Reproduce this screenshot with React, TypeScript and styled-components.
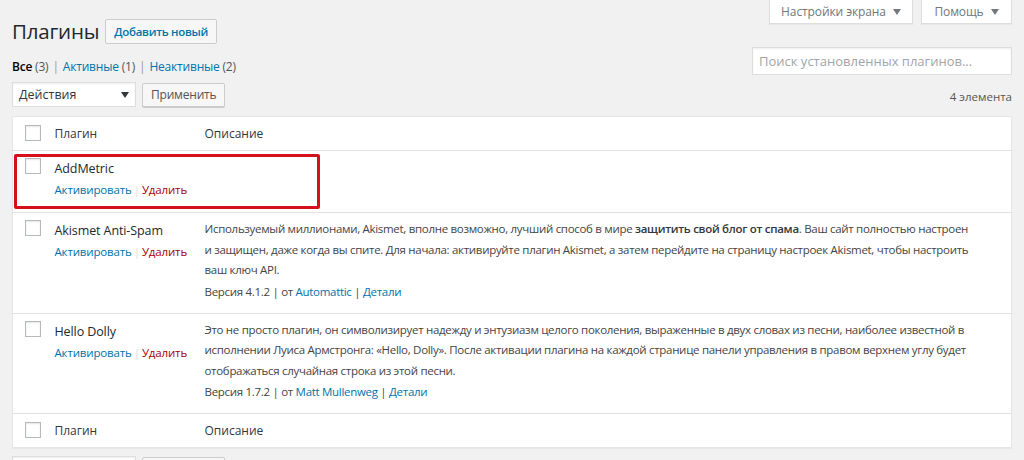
import styled, { createGlobalStyle } from 'styled-components';

const GlobalStyle = createGlobalStyle`
  html, body {
    margin: 0;
    padding: 0;
    overflow: hidden;
  }
  body {
    background: #f1f1f1;
    font-family: 'Open Sans', 'Noto Sans', sans-serif;
    font-size: 12px;
    color: #444;
  }
`;

const Page = styled.div`
  padding: 0 12px;
`;

const TopRow = styled.div`
  display: flex;
  justify-content: space-between;
  align-items: flex-start;
  height: 47px;
`;

const TitleGroup = styled.div`
  display: flex;
  align-items: center;
  gap: 6px;
  margin-top: 19px;
`;

const Title = styled.h1`
  margin: 0;
  font-size: 20.5px;
  font-weight: 400;
  line-height: 25px;
  color: #23282d;
  letter-spacing: -0.2px;
`;

const AddButton = styled.a`
  display: inline-flex;
  align-items: center;
  height: 25px;
  box-sizing: border-box;
  padding: 0 8px;
  border: 1px solid #ccc;
  border-radius: 2px;
  background: #f7f7f7;
  color: #0073aa;
  font-size: 11.5px;
  font-weight: 600;
  letter-spacing: -0.3px;
`;

const Tabs = styled.div`
  display: flex;
  gap: 8px;
`;

const Tab = styled.div<{ $w: number }>`
  width: ${(p) => p.$w}px;
  height: 24px;
  box-sizing: border-box;
  display: flex;
  align-items: center;
  justify-content: center;
  gap: 7px;
  background: #fff;
  border: 1px solid #ddd;
  border-top: none;
  box-shadow: 0 1px 1px rgba(0, 0, 0, 0.04);
  color: #72777c;
  font-size: 12px;
  letter-spacing: -0.1px;
`;

const Caret = styled.span<{ $color?: string }>`
  width: 0;
  height: 0;
  border-left: 4px solid transparent;
  border-right: 4px solid transparent;
  border-top: 6px solid ${(p) => p.$color ?? '#72777c'};
`;

const FilterRow = styled.div`
  display: flex;
  justify-content: space-between;
  align-items: flex-start;
  height: 28px;
`;

const Filters = styled.div`
  padding-top: 10px;
  line-height: 20px;
  color: #555;
  font-size: 12px;
  letter-spacing: -0.2px;
`;

const Current = styled.span`
  color: #000;
  font-weight: 600;
`;

const Link = styled.a<{ $danger?: boolean }>`
  color: ${(p) => (p.$danger ? '#a00' : '#0073aa')};
  text-decoration: none;
`;

const Count = styled.span`
  color: #555;
`;

const Sep = styled.span<{ $light?: boolean }>`
  color: ${(p) => (p.$light ? '#ddd' : '#999')};
  margin: 0 ${(p) => (p.$light ? 2 : 4)}px;
`;

const Search = styled.input`
  width: 260px;
  height: 28px;
  box-sizing: border-box;
  border: 1px solid #ddd;
  box-shadow: inset 0 1px 2px rgba(0, 0, 0, 0.07);
  background: #fff;
  padding: 0 6px;
  font-family: inherit;
  font-size: 13px;
  outline: none;
  &::placeholder {
    color: #a0a5aa;
  }
`;

const NavRow = styled.div<{ $top: number }>`
  display: flex;
  justify-content: space-between;
  align-items: center;
  margin-top: ${(p) => p.$top}px;
  height: 25px;
`;

const NavLeft = styled.div`
  display: flex;
  align-items: center;
  gap: 6px;
`;

const Select = styled.div`
  width: 124px;
  height: 25px;
  box-sizing: border-box;
  border: 1px solid #ddd;
  background: #fff;
  box-shadow: inset 0 1px 2px rgba(0, 0, 0, 0.07);
  display: flex;
  align-items: center;
  justify-content: space-between;
  padding: 0 6px 0 6px;
  color: #32373c;
  font-size: 12.5px;
`;

const Button = styled.button`
  height: 24px;
  box-sizing: border-box;
  padding: 0 8px;
  border: 1px solid #ccc;
  border-radius: 2px;
  background: #f7f7f7;
  box-shadow: 0 1px 0 #ccc;
  color: #555;
  font-family: inherit;
  font-size: 12px;
  letter-spacing: -0.2px;
`;

const ItemCount = styled.div`
  color: #555;
  font-size: 11.5px;
  padding-top: 4px;
`;

const TableWrap = styled.div`
  position: relative;
  margin-top: 9px;
`;

const Table = styled.table`
  width: 100%;
  table-layout: fixed;
  border-collapse: collapse;
  background: #fff;
  border: 1px solid #e5e5e5;
  box-shadow: 0 1px 1px rgba(0, 0, 0, 0.04);
  td {
    box-sizing: border-box;
  }
`;

const Row = styled.tr`
  border-top: 1px solid #e1e1e1;
  &:first-child {
    border-top: none;
  }
`;

const CheckCell = styled.td<{ $head?: boolean }>`
  width: 32px;
  padding: ${(p) => (p.$head ? '8px 0 0 12px' : '7px 0 0 12px')};
  vertical-align: top;
`;

const Check = styled.span`
  display: block;
  width: 16px;
  height: 16px;
  box-sizing: border-box;
  border: 1px solid #b4b9be;
  background: #fff;
  box-shadow: inset 0 1px 2px rgba(0, 0, 0, 0.1);
`;

const HeadCell = styled.td<{ $w?: number }>`
  ${(p) => (p.$w ? `width: ${p.$w}px;` : '')}
  padding: 8px 10px;
  line-height: 17px;
  color: #32373c;
  font-size: 12px;
  vertical-align: top;
`;

const TitleCell = styled.td`
  width: 150px;
  padding: 8px 10px 12px;
  vertical-align: top;
`;

const Name = styled.div`
  font-size: 12.5px;
  line-height: 20px;
  color: #23282d;
  letter-spacing: -0.1px;
`;

const Actions = styled.div`
  margin-top: 1px;
  line-height: 20px;
  font-size: 11.5px;
  letter-spacing: -0.15px;
  white-space: nowrap;
`;

const DescCell = styled.td`
  padding: 6px 30px 11px 10px;
  vertical-align: top;
  color: #444;
  font-size: 11.5px;
  letter-spacing: -0.3px;
`;

const Desc = styled.p`
  margin: 0;
  line-height: 20.5px;
  white-space: nowrap;
  strong {
    font-weight: 600;
    color: #32373c;
  }
`;

const Meta = styled.div`
  margin-top: 1px;
  line-height: 20px;
  color: #444;
`;

const Highlight = styled.div`
  position: absolute;
  left: 2px;
  top: 38px;
  width: 306px;
  height: 55px;
  box-sizing: border-box;
  border: 3px solid #d5101c;
  border-radius: 2px;
  pointer-events: none;
`;

type Plugin = {
  name: string;
  desc?: React.ReactNode;
  version?: string;
  author?: string;
};

const plugins: Plugin[] = [
  { name: 'AddMetric' },
  {
    name: 'Akismet Anti-Spam',
    desc: (
      <>
        Используемый миллионами, Akismet, вполне возможно, лучший способ в мире{' '}
        <strong>защитить свой блог от спама</strong>. Ваш сайт полностью настроен
        <br />
        и защищен, даже когда вы спите. Для начала: активируйте плагин Akismet, а затем
        перейдите на страницу настроек Akismet, чтобы настроить
        <br />
        ваш ключ API.
      </>
    ),
    version: '4.1.2',
    author: 'Automattic',
  },
  {
    name: 'Hello Dolly',
    desc: (
      <>
        Это не просто плагин, он символизирует надежду и энтузиазм целого поколения,
        выраженные в двух словах из песни, наиболее известной в
        <br />
        исполнении Луиса Армстронга: «Hello, Dolly». После активации плагина на каждой
        странице панели управления в правом верхнем углу будет
        <br />
        отображаться случайная строка из этой песни.
      </>
    ),
    version: '1.7.2',
    author: 'Matt Mullenweg',
  },
];

const HeaderRow = () => (
  <Row>
    <CheckCell $head>
      <Check />
    </CheckCell>
    <HeadCell $w={150}>Плагин</HeadCell>
    <HeadCell>Описание</HeadCell>
  </Row>
);

const BulkActions = () => (
  <NavLeft>
    <Select>
      Действия
      <Caret $color="#32373c" />
    </Select>
    <Button>Применить</Button>
  </NavLeft>
);

export default function App() {
  return (
    <Page>
      <GlobalStyle />
      <TopRow>
        <TitleGroup>
          <Title>Плагины</Title>
          <AddButton>Добавить новый</AddButton>
        </TitleGroup>
        <Tabs>
          <Tab $w={144}>
            Настройки экрана <Caret />
          </Tab>
          <Tab $w={91}>
            Помощь <Caret />
          </Tab>
        </Tabs>
      </TopRow>

      <FilterRow>
        <Filters>
          <Current>Все</Current> <Count>(3)</Count>
          <Sep>|</Sep>
          <Link>Активные</Link> <Count>(1)</Count>
          <Sep>|</Sep>
          <Link>Неактивные</Link> <Count>(2)</Count>
        </Filters>
        <Search placeholder="Поиск установленных плагинов..." />
      </FilterRow>

      <NavRow $top={7}>
        <BulkActions />
        <ItemCount>4 элемента</ItemCount>
      </NavRow>

      <TableWrap>
        <Table>
          <tbody>
            <HeaderRow />
            {plugins.map((p) => (
              <Row key={p.name}>
                <CheckCell>
                  <Check />
                </CheckCell>
                <TitleCell>
                  <Name>{p.name}</Name>
                  <Actions>
                    <Link>Активировать</Link>
                    <Sep $light>|</Sep>
                    <Link $danger>Удалить</Link>
                  </Actions>
                </TitleCell>
                <DescCell>
                  {p.desc && <Desc>{p.desc}</Desc>}
                  {p.version && (
                    <Meta>
                      Версия {p.version} | от <Link>{p.author}</Link> | <Link>Детали</Link>
                    </Meta>
                  )}
                </DescCell>
              </Row>
            ))}
            <HeaderRow />
          </tbody>
        </Table>
        <Highlight />
      </TableWrap>

      <NavRow $top={8}>
        <BulkActions />
      </NavRow>
    </Page>
  );
}
